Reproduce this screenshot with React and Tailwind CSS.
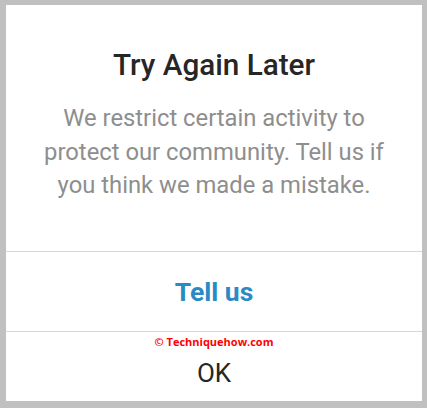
export default function App() {
  return (
    <div className="w-[427px] h-[408px] bg-[#c0c0c0] pt-[5px] pl-[6px] pr-[5px] pb-[7px] flex" style={{ fontFamily: "Roboto, 'Liberation Sans', sans-serif" }}>
      <div className="flex-1 bg-white flex flex-col">
        <div className="h-[247px] flex flex-col items-center pt-[42px] border-b border-[#d6d6d6]">
          <h1 className="text-[29.7px] leading-[36px] font-medium text-[#262626]">Try Again Later</h1>
          <p className="mt-[19px] text-[23.8px] leading-[33.5px] text-[#8e8e8e] text-center whitespace-nowrap">
            We restrict certain activity to<br />protect our community. Tell us if<br />you think we made a mistake.
          </p>
        </div>
        <div className="h-[80px] flex items-center justify-center border-b border-[#d6d6d6]">
          <span className="text-[26.5px] leading-[30px] font-bold text-[#2b8ac6]">Tell us</span>
        </div>
        <div className="flex-1 flex flex-col items-center">
          <span className="mt-[2px] text-[11px] leading-[16px] font-bold text-[#ff0000]" style={{ fontFamily: "'Open Sans', sans-serif" }}>© Techniquehow.com</span>
          <span className="mt-[8px] text-[26px] leading-[30px] text-[#262626]">OK</span>
        </div>
      </div>
    </div>
  );
}
